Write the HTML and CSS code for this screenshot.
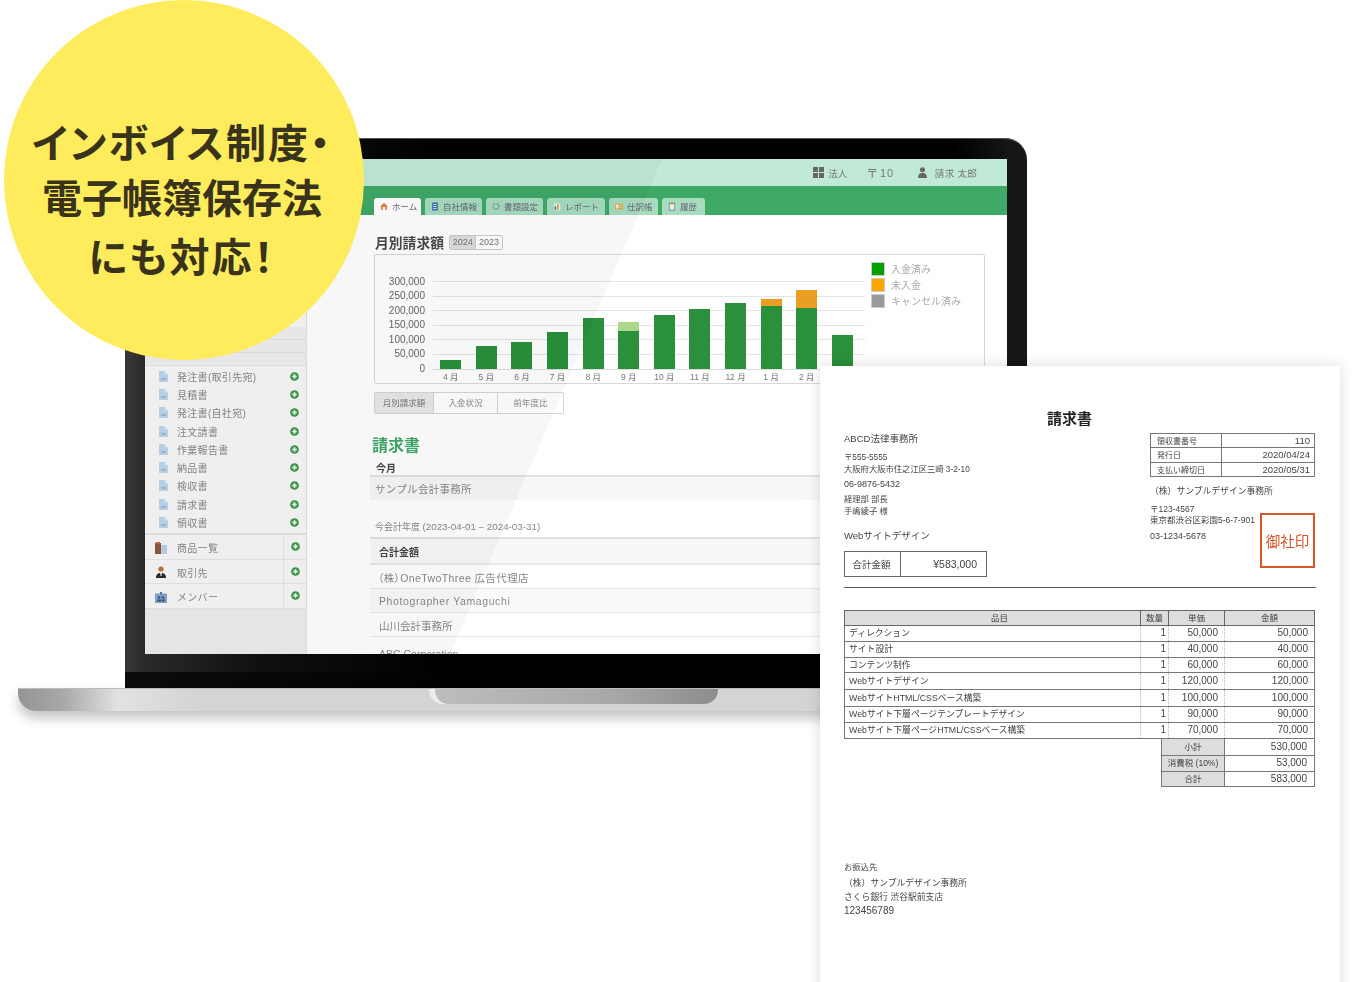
FILE: index.html
```html
<!DOCTYPE html>
<html lang="ja">
<head>
    <meta charset="UTF-8" />
    <title>インボイス制度・電子帳簿保存法にも対応</title>
    <link rel="stylesheet" href="styles.css">
</head>
<body>
<svg class="defs" aria-hidden="true">
    <filter id="rough"><feTurbulence type="fractalNoise" baseFrequency="0.5" numOctaves="2" seed="3"/><feDisplacementMap in="SourceGraphic" scale="1.6"/></filter>
    <symbol id="doc" viewBox="0 0 10 12"><path d="M0 0h6.5L10 3.5V12H0z" fill="#bdd6ee"/><path d="M6.5 0L10 3.5H6.5z" fill="#e8f1f9"/><path d="M2.5 7.5h5v2.500h-5z" fill="#a3b9d0"/></symbol>
    <symbol id="plus" viewBox="0 0 10 10"><circle cx="5" cy="5" r="4.8" fill="#3b9a4a"/><path d="M2.5 4.1h1.600V2.500h1.800v1.600h1.600v1.800H5.900v1.600H4.100V5.900H2.500z" fill="#fff"/></symbol>
    <symbol id="person" viewBox="0 0 10 12"><circle cx="5" cy="3" r="2.8"/><path d="M0 12c0-3.500 1.500-5 3.500-5.500h3C8.500 7 10 8.500 10 12z"/></symbol>
</svg>

<div class="stage">
    <div class="laptop">
        <div class="lid">
            <div class="screen">
                <header class="topbar">
                    <span class="topitem">
                        <svg class="ico-grid" viewBox="0 0 11 11"><path d="M0 0h5v5H0zM6 0h5v5H6zM0 6h5v5H0zM6 6h5v5H6z"/></svg>法人
                    </span>
                    <span class="topitem topcount"><span class="post">〒</span>10</span>
                    <span class="topitem topuser">
                        <svg class="ico-person"><use href="#person"/></svg>請求 太郎
                    </span>
                </header>
                <nav class="tabs">
                    <a class="tab tab-on tab-home">
                        <svg class="tab-ico" viewBox="0 0 10 10"><path d="M5 .5L10 5H8.500v4.500h-7V5H0z" fill="#e07a3a"/><path d="M3.500 5.500h3v4h-3z" fill="#fff"/></svg>ホーム
                    </a>
                    <a class="tab tab-info">
                        <svg class="tab-ico" viewBox="0 0 10 10"><path d="M1.500 0h7v10h-7z" fill="#3f6fb5"/><path d="M3 2h4v1H3zM3 4.500h4v1H3zM3 7h4v1H3z" fill="#cfe0f2"/></svg>自社情報
                    </a>
                    <a class="tab tab-info">
                        <svg class="tab-ico" viewBox="0 0 10 10"><circle cx="5" cy="5" r="3.5" fill="none" stroke="#8b9a90" stroke-width="2" stroke-dasharray="1.500 .7"/></svg>書類設定
                    </a>
                    <a class="tab tab-report">
                        <svg class="tab-ico" viewBox="0 0 10 10"><path d="M1 1h8v9H1z" fill="#e6efe8"/><path d="M2 5h2v4H2z" fill="#3f6fb5"/><path d="M5 2h2v7H5z" fill="#d9a93a"/></svg>レポート
                    </a>
                    <a class="tab tab-ledger">
                        <svg class="tab-ico" viewBox="0 0 10 10"><path d="M0 1.500h10v7H0z" fill="#d9a93a"/><path d="M1 2.500h3.500v5H1zM5.500 3.500H9v1H5.500zM5.500 5.500H9v1H5.500z" fill="#f6ecc8"/></svg>仕訳帳
                    </a>
                    <a class="tab tab-history">
                        <svg class="tab-ico" viewBox="0 0 10 10"><path d="M1 .5h8v9.500H1z" fill="#4d7fc0"/><path d="M2 1.500h6V9H2z" fill="#f5f0d8"/><path d="M3 0h4v2.500H3z" fill="#c79a3a"/></svg>履歴
                    </a>
                </nav>
                <div class="workspace">
                    <aside class="sidebar">
                        <div class="side-top"><div class="side-line"></div><div class="side-line"></div><div class="side-line"></div></div>
                        <ul class="doclist">
                            <li><svg class="doc"><use href="#doc"/></svg><span>発注書(取引先宛)</span><svg class="plus"><use href="#plus"/></svg></li>
                            <li><svg class="doc"><use href="#doc"/></svg><span>見積書</span><svg class="plus"><use href="#plus"/></svg></li>
                            <li><svg class="doc"><use href="#doc"/></svg><span>発注書(自社宛)</span><svg class="plus"><use href="#plus"/></svg></li>
                            <li><svg class="doc"><use href="#doc"/></svg><span>注文請書</span><svg class="plus"><use href="#plus"/></svg></li>
                            <li><svg class="doc"><use href="#doc"/></svg><span>作業報告書</span><svg class="plus"><use href="#plus"/></svg></li>
                            <li><svg class="doc"><use href="#doc"/></svg><span>納品書</span><svg class="plus"><use href="#plus"/></svg></li>
                            <li><svg class="doc"><use href="#doc"/></svg><span>検収書</span><svg class="plus"><use href="#plus"/></svg></li>
                            <li><svg class="doc"><use href="#doc"/></svg><span>請求書</span><svg class="plus"><use href="#plus"/></svg></li>
                            <li><svg class="doc"><use href="#doc"/></svg><span>領収書</span><svg class="plus"><use href="#plus"/></svg></li>
                        </ul>
                        <div class="siderow">
                            <svg class="side-ico" viewBox="0 0 12 12"><path d="M0 1h6v11H0z" fill="#8a5a44"/><path d="M1 0h4v2H1z" fill="#c9693a"/><path d="M6 3h6v9H6z" fill="#b9d2ea"/></svg>
                            <span>商品一覧</span>
                            <div class="siderow-add"><svg class="plus"><use href="#plus"/></svg></div>
                        </div>
                        <div class="siderow">
                            <svg class="side-ico" viewBox="0 0 12 12"><circle cx="6" cy="3" r="2.6" fill="#b8733f"/><path d="M1 12c0-3.500 1.500-5 5-5s5 1.500 5 5z" fill="#2b2b2b"/><path d="M5 7h2l-.5 3h-1z" fill="#e0e0e0"/></svg>
                            <span>取引先</span>
                            <div class="siderow-add"><svg class="plus"><use href="#plus"/></svg></div>
                        </div>
                        <div class="siderow">
                            <svg class="side-ico" viewBox="0 0 12 12"><path d="M0 2.500h12V12H0z" fill="#7fa8d2"/><path d="M5 1h2v2.500H5z" fill="#55779b"/><circle cx="4" cy="6.500" r="1.3" fill="#46586c"/><circle cx="8" cy="6.500" r="1.3" fill="#46586c"/><path d="M2 10.500h4V8.500H2zM6.500 10.500h3.500V8.500H6.500z" fill="#46586c"/></svg>
                            <span>メンバー</span>
                            <div class="siderow-add"><svg class="plus"><use href="#plus"/></svg></div>
                        </div>
                    </aside>
                    <main class="main">
                        <div class="chart-head">
                            <h2>月別請求額</h2>
                            <div class="years"><span class="year-on">2024</span><span>2023</span></div>
                        </div>
                        <section class="chart">
                            <div class="axis">
                                <span>300,000</span><span>250,000</span><span>200,000</span><span>150,000</span><span>100,000</span><span>50,000</span><span>0</span>
                            </div>
                            <div class="plot">
                                <div class="bars">
                                    <div class="col"><i class="paid" style="height:9px"></i></div>
                                    <div class="col"><i class="paid" style="height:23px"></i></div>
                                    <div class="col"><i class="paid" style="height:27px"></i></div>
                                    <div class="col"><i class="paid" style="height:37px"></i></div>
                                    <div class="col"><i class="paid" style="height:51px"></i></div>
                                    <div class="col"><i class="pending" style="height:9px"></i><i class="paid" style="height:38px"></i></div>
                                    <div class="col"><i class="paid" style="height:54px"></i></div>
                                    <div class="col"><i class="paid" style="height:60px"></i></div>
                                    <div class="col"><i class="paid" style="height:66px"></i></div>
                                    <div class="col"><i class="unpaid" style="height:7px"></i><i class="paid" style="height:63px"></i></div>
                                    <div class="col"><i class="unpaid" style="height:18px"></i><i class="paid" style="height:61px"></i></div>
                                    <div class="col"><i class="paid" style="height:34px"></i></div>
                                </div>
                                <div class="months">
                                    <span>4 月</span><span>5 月</span><span>6 月</span><span>7 月</span><span>8 月</span><span>9 月</span><span>10 月</span><span>11 月</span><span>12 月</span><span>1 月</span><span>2 月</span><span>3 月</span>
                                </div>
                            </div>
                            <ul class="legend">
                                <li><i class="swatch sw-paid"></i>入金済み</li>
                                <li><i class="swatch sw-unpaid"></i>未入金</li>
                                <li><i class="swatch sw-cancel"></i>キャンセル済み</li>
                            </ul>
                        </section>
                        <div class="chart-tabs">
                            <span class="ctab ctab-on">月別請求額</span><span class="ctab ctab-mid">入金状況</span><span class="ctab ctab-end">前年度比</span>
                        </div>
                        <h1 class="section-title">請求書</h1>
                        <div class="month-head">今月</div>
                        <div class="month-row">サンプル会計事務所</div>
                        <div class="period">今会計年度 <span class="period-date">(2023-04-01 – 2024-03-31)</span></div>
                        <div class="rows">
                            <div class="row row-head">合計金額</div>
                            <div class="row row-co">（株）OneTwoThree 広告代理店</div>
                            <div class="row row-alt">Photographer Yamaguchi</div>
                            <div class="row">山川会計事務所</div>
                            <div class="row row-last">ABC Corporation</div>
                        </div>
                    </main>
                </div>
                <div class="glare"></div>
            </div>
            <div class="chin"></div>
            <div class="chin-low"></div>
        </div>
        <div class="base"><div class="notch"></div></div>
    </div>

    <div class="paper">
        <h1 class="paper-title">請求書</h1>
        <div class="paper-head">
            <div class="to">
                <p class="to-name">ABCD法律事務所</p>
                <p class="to-addr">〒555-5555<br>大阪府大阪市住之江区三崎 3-2-10</p>
                <p class="to-tel">06-9876-5432</p>
                <p class="to-person">経理部 部長<br>手嶋綾子 様</p>
                <p class="to-subject">Webサイトデザイン</p>
                <table class="total-box">
                    <tr><td class="total-label">合計金額</td><td class="total-value">¥583,000</td></tr>
                </table>
            </div>
            <div class="from">
                <table class="meta">
                    <tr><td class="meta-label">領収書番号</td><td>110</td></tr>
                    <tr><td class="meta-label">発行日</td><td>2020/04/24</td></tr>
                    <tr><td class="meta-label">支払い締切日</td><td>2020/05/31</td></tr>
                </table>
                <p class="from-name">（株）サンプルデザイン事務所</p>
                <p class="from-addr">〒123-4567<br>東京都渋谷区彩園5-6-7-901</p>
                <p class="from-tel">03-1234-5678</p>
                <div class="stamp">御社印</div>
            </div>
        </div>
        <hr class="paper-rule">
        <table class="items">
            <thead>
                <tr><th class="c-name">品目</th><th class="c-qty">数量</th><th class="c-price">単価</th><th class="c-sum">金額</th></tr>
            </thead>
            <tbody>
                <tr><td>ディレクション</td><td>1</td><td>50,000</td><td>50,000</td></tr>
                <tr><td>サイト設計</td><td>1</td><td>40,000</td><td>40,000</td></tr>
                <tr class="short"><td>コンテンツ制作</td><td>1</td><td>60,000</td><td>60,000</td></tr>
                <tr class="tall"><td>Webサイトデザイン</td><td>1</td><td>120,000</td><td>120,000</td></tr>
                <tr class="tall"><td>WebサイトHTML/CSSベース構築</td><td>1</td><td>100,000</td><td>100,000</td></tr>
                <tr><td>Webサイト下層ページテンプレートデザイン</td><td>1</td><td>90,000</td><td>90,000</td></tr>
                <tr><td>Webサイト下層ページHTML/CSSベース構築</td><td>1</td><td>70,000</td><td>70,000</td></tr>
            </tbody>
        </table>
        <table class="summary">
            <tr><td class="sum-label">小計</td><td>530,000</td></tr>
            <tr><td class="sum-label">消費税 (10%)</td><td>53,000</td></tr>
            <tr class="short"><td class="sum-label">合計</td><td>583,000</td></tr>
        </table>
        <div class="bank">
            <p class="bank-title">お振込先</p>
            <p>（株）サンプルデザイン事務所<br>さくら銀行 渋谷駅前支店</p>
            <p class="bank-no">123456789</p>
        </div>
    </div>

    <div class="badge">
        <span class="badge-wide">インボイス制度・</span>
        <span>電子帳簿保存法</span>
        <span class="badge-wide badge-last">にも対応！</span>
    </div>
</div>
</body>
</html>
```

FILE: styles.css
```css
* {
    box-sizing: border-box;
}
html, body {
    margin: 0;
    background: #fff;
}
body {
    font-family: "Liberation Sans", "Noto Sans CJK JP", sans-serif;
    color: #444;
}
h1, h2, p, ul {
    margin: 0;
    padding: 0;
    list-style: none;
}
.defs {
    position: absolute;
    width: 0;
    height: 0;
}
.stage {
    position: relative;
    width: 1360px;
    height: 982px;
    overflow: hidden;
}

/* yellow badge */
.badge {
    position: absolute;
    left: 4px;
    top: 0;
    width: 360px;
    height: 360px;
    border-radius: 50%;
    background: #feec5c;
    color: #38331a;
    font-family: "Noto Sans CJK JP", sans-serif;
    font-weight: 700;
    font-size: 40px;
    line-height: 55px;
    font-feature-settings: "palt";
    display: flex;
    flex-direction: column;
    align-items: center;
    padding: 114px 4px 0 0;
    white-space: nowrap;
}
.badge-wide {
    letter-spacing: 2px;
}
.badge-last {
    margin-top: 4px;
}

/* laptop */
.laptop {
    position: absolute;
    left: 18px;
    top: 138px;
    width: 1116px;
}
.lid {
    margin-left: 107px;
    width: 902px;
    height: 550px;
    padding: 21px 20px 0;
    border-radius: 22px 22px 0 0;
    background: linear-gradient(to right, #383838 0, #2a2a2a 2%, #111 14%, #000 35%, #000 92%, #161616 98%);
    box-shadow: inset 0 1px 0 #555;
}
.chin {
    height: 18px;
}
.chin-low {
    height: 16px;
    margin: 0 -20px;
    background: linear-gradient(to right, #0c0c0c, #000 40%);
}
.base {
    height: 23px;
    border-radius: 0 0 18px 18px;
    background: linear-gradient(to right, #949494 0, #a8a8a8 4%, #e2e2e2 9%, #d4d4d4 16%);
    box-shadow: 0 7px 12px rgba(0, 0, 0, 0.24);
    display: flex;
    justify-content: center;
    border-top: 1px solid #bbb;
}
.notch {
    width: 283px;
    height: 15px;
    border-radius: 0 0 14px 14px;
    background: linear-gradient(to right, #bdbdbd, #a9a9a9 60%, #8d8d8d);
    box-shadow: -6px 0 0 #ececec;
}

/* screen */
.screen {
    position: relative;
    width: 862px;
    height: 495px;
    overflow: hidden;
    background: #fff;
    display: flex;
    flex-direction: column;
    filter: blur(0.35px);
}
.glare {
    position: absolute;
    inset: 0;
    background: rgba(0, 0, 0, 0.03);
    clip-path: polygon(0 0, 517px 0, 305px 495px, 0 495px);
}
.topbar {
    height: 27px;
    flex: none;
    background: #c0ead6;
    display: flex;
    align-items: center;
    justify-content: flex-end;
    padding-right: 30px;
    color: #777;
    font-size: 9.5px;
}
.topitem {
    display: flex;
    align-items: center;
}
.ico-grid {
    width: 11px;
    height: 11px;
    margin-right: 4px;
    fill: #666;
}
.topcount {
    margin-left: 19px;
    font-size: 11px;
    letter-spacing: 0.8px;
}
.post {
    font-size: 12px;
    margin-right: 1px;
}
.topuser {
    margin-left: 24px;
    letter-spacing: 0.3px;
}
.ico-person {
    width: 9px;
    height: 11px;
    margin-right: 8px;
    fill: #666;
}
.tabs {
    height: 29px;
    flex: none;
    background: #3fa968;
    display: flex;
    align-items: flex-end;
    gap: 4px;
    padding-left: 229px;
}
.tab {
    height: 17px;
    width: 57px;
    border-radius: 3px 3px 0 0;
    background: #a7dcbf;
    color: #667;
    font-size: 8.5px;
    display: flex;
    align-items: center;
    padding: 0 0 1px 6px;
    white-space: nowrap;
}
.tab-on {
    background: #fff;
}
.tab-home {
    width: 47px;
}
.tab-report {
    width: 58px;
}
.tab-ledger {
    width: 49px;
}
.tab-history {
    width: 43px;
}
.tab-ico {
    width: 8px;
    height: 9px;
    margin-right: 4px;
    flex: none;
}
.workspace {
    flex: 1;
    display: flex;
    min-height: 0;
}

/* sidebar */
.sidebar {
    width: 162px;
    flex: none;
    background: #ededed;
    border-right: 1px solid #e2e2e2;
}
.side-top {
    height: 151px;
    padding-top: 112px;
    background: #f7f7f7;
    border-bottom: 2px solid #e6e6e6;
}
.side-line {
    height: 13px;
    border-bottom: 1px solid #e2e2e2;
    background: #efefef;
}
.doclist {
    background: #f7f7f7;
    height: 169px;
    padding-top: 1px;
    border-bottom: 2px solid #e6e6e6;
}
.doclist li {
    height: 18.3px;
    display: flex;
    align-items: center;
    padding-left: 14px;
    font-size: 10px;
    color: #888;
    letter-spacing: 0.3px;
}
.doclist span {
    flex: 1;
}
.doc {
    width: 9px;
    height: 11px;
    margin-right: 9px;
}
.plus {
    width: 9px;
    height: 9px;
    flex: none;
}
.doclist .plus {
    margin-right: 7px;
}
.siderow {
    height: 24.5px;
    background: #f7f7f7;
    border-bottom: 1px solid #e6e6e6;
    display: flex;
    align-items: center;
    padding: 2px 0 0 10px;
    font-size: 10px;
    color: #888;
    letter-spacing: 0.3px;
}
.siderow span {
    flex: 1;
}
.side-ico {
    width: 12px;
    height: 12px;
    margin-right: 10px;
}
.siderow-add {
    width: 23px;
    height: calc(100% + 2px);
    margin-top: -2px;
    border-left: 1px solid #e6e6e6;
    display: flex;
    align-items: center;
    justify-content: center;
}

/* main column */
.main {
    flex: 1;
    padding: 17px 22px 0 63px;
    min-width: 0;
}
.chart-head {
    height: 20px;
    margin-left: 5px;
    display: flex;
    align-items: center;
}
.chart-head h2 {
    font-size: 13.8px;
    font-weight: 700;
    color: #4a4a4a;
}
.years {
    display: flex;
    margin-left: 5px;
    border: 1px solid #ccc;
    border-radius: 2px;
    font-size: 9px;
    color: #777;
    height: 15px;
    line-height: 13px;
}
.years span {
    padding: 0 2.7px;
}
.year-on {
    background: #ddd;
    border-right: 1px solid #ccc;
}
.chart {
    margin: 2px 0 0 4px;
    height: 130px;
    border: 1px solid #d8d8d8;
    border-radius: 2px;
    padding-top: 7px;
    display: flex;
    align-items: flex-start;
}
.axis {
    width: 50px;
    margin-top: 12.5px;
    display: flex;
    flex-direction: column;
    align-items: flex-end;
    font-size: 10px;
    color: #666;
}
.axis span {
    height: 14.6px;
    line-height: 14.6px;
}
.plot {
    width: 432px;
    margin: 19px 0 0 8px;
    flex: none;
}
.bars, .months {
    display: grid;
    grid-template-columns: repeat(12, 35.6px);
}
.bars {
    height: 89px;
    background: repeating-linear-gradient(to bottom, #e4e4e4 0, #e4e4e4 1px, transparent 1px, transparent 14.6px);
    border-bottom: 1px solid #ddd;
}
.col {
    display: flex;
    flex-direction: column;
    justify-content: flex-end;
    align-items: center;
}
.col i {
    display: block;
    width: 21px;
    flex: none;
}
.paid {
    background: #2a903b;
}
.pending {
    background: #acd88c;
}
.unpaid {
    background: #eb9f22;
}
.months {
    font-size: 8.5px;
    color: #777;
    text-align: center;
    line-height: 14px;
}
.legend {
    margin: -2px 0 0 6px;
    font-size: 10px;
    color: #aaa;
    white-space: nowrap;
}
.legend li {
    display: flex;
    align-items: center;
    height: 16px;
}
.swatch {
    width: 14px;
    height: 14px;
    margin: 2px 6px 0 0;
    border: 1px solid #ccc;
}
.sw-paid {
    background: #00a000;
}
.sw-unpaid {
    background: #ffa500;
}
.sw-cancel {
    background: #999;
}
.chart-tabs {
    margin: 8px 0 0 4px;
    width: 190px;
    height: 22px;
    display: flex;
    border: 1px solid #d5d5d5;
    border-radius: 2px;
    font-size: 8.5px;
    color: #888;
}
.ctab {
    width: 59px;
    text-align: center;
    line-height: 20px;
    border-right: 1px solid #d5d5d5;
}
.ctab-mid {
    width: 64px;
}
.ctab-end {
    width: 65px;
    border-right: none;
}
.ctab-on {
    background: #e8e8e8;
    color: #777;
}
.section-title {
    margin: 21px 0 0 2px;
    font-size: 16px;
    line-height: 22px;
    font-weight: 700;
    color: #3fa968;
}
.month-head {
    height: 20px;
    padding: 5px 0 0 6px;
    font-size: 10px;
    font-weight: 700;
    line-height: 13px;
    color: #444;
    border-bottom: 2px solid #e2e2e2;
}
.month-row {
    height: 23px;
    padding: 1px 0 0 5px;
    line-height: 23px;
    background: #f7f7f7;
    font-size: 10.5px;
    letter-spacing: 0.3px;
    color: #888;
}
.period {
    height: 37px;
    padding: 21px 0 0 5px;
    font-size: 9px;
    line-height: 12px;
    color: #888;
}
.period-date {
    font-size: 9.8px;
}
.rows {
    border-top: 2px solid #e2e2e2;
}
.row {
    height: 24px;
    padding: 3px 0 0 9px;
    line-height: 20px;
    font-size: 10.5px;
    color: #888;
    border-bottom: 1px solid #e8e8e8;
}
.row-head {
    height: 26px;
    background: #f8f8f8;
    border-bottom-width: 2px;
    font-weight: 700;
    font-size: 10px;
    color: #444;
    padding-top: 4px;
}
.row-co {
    letter-spacing: 0.4px;
    font-feature-settings: "palt";
    padding-left: 8px;
}
.row-alt {
    background: #fafafa;
    letter-spacing: 0.6px;
    padding-top: 2px;
}
.row-last {
    padding-top: 7px;
}

/* invoice sheet */
.paper {
    position: absolute;
    left: 820px;
    top: 366px;
    width: 520px;
    height: 640px;
    background: #fff;
    padding: 43px 25px 0 24px;
    box-shadow: 0 0 14px rgba(0, 0, 0, 0.14);
    color: #444;
    font-size: 8.8px;
}
.paper-title, .paper-head, .items, .summary, .bank {
    filter: blur(0.25px);
}
.paper-title {
    text-align: center;
    font-size: 15px;
    font-weight: 700;
    line-height: 20px;
    color: #222;
    padding-right: 20px;
}
.paper-head {
    display: flex;
    justify-content: space-between;
    margin-top: 5px;
    height: 153px;
}
.to {
    width: 143px;
    white-space: nowrap;
}
.to-name {
    font-size: 9.5px;
    line-height: 12px;
    margin-top: -1px;
}
.to-addr {
    line-height: 11.5px;
    margin-top: 7px;
    font-size: 8.3px;
}
.to-tel {
    margin-top: 3px;
    line-height: 12px;
    font-size: 9px;
}
.to-person {
    margin-top: 4px;
    font-size: 8.3px;
    line-height: 11.5px;
}
.to-subject {
    margin-top: 13px;
    font-size: 9.5px;
    line-height: 12px;
}
.total-box {
    margin-top: 9px;
    width: 143px;
    height: 26px;
    border-collapse: collapse;
    font-size: 9.5px;
}
.total-box td {
    border: 1px solid #666;
}
.total-label {
    width: 56px;
    padding-right: 3px;
    text-align: center;
}
.total-box .total-value {
    text-align: right;
    padding-right: 9px;
    font-size: 10.5px;
}
.from {
    position: relative;
    width: 165px;
    white-space: nowrap;
    margin-top: -1px;
}
.meta {
    width: 165px;
    border-collapse: collapse;
    font-size: 9.5px;
}
.meta td {
    height: 14.3px;
    padding: 0 4px 0 6px;
    border: 1px solid #777;
    text-align: right;
}
.meta .meta-label {
    width: 71px;
    text-align: left;
    font-size: 8px;
}
.from-name {
    margin-top: 8px;
    line-height: 12px;
}
.from-addr {
    margin-top: 7px;
    line-height: 11.5px;
    font-size: 8.5px;
}
.from-tel {
    margin-top: 3px;
    line-height: 12px;
    font-size: 9px;
}
.stamp {
    position: absolute;
    right: 0;
    top: 80px;
    width: 55px;
    height: 55px;
    border: 2px solid #d9552c;
    color: #d9552c;
    font-size: 14.5px;
    line-height: 54px;
    text-align: center;
    white-space: nowrap;
    filter: url(#rough);
}
.paper-rule {
    margin: 0;
    height: 1px;
    width: 472px;
    border: none;
    background: #555;
}
.items {
    margin-top: 22px;
    width: 471px;
    table-layout: fixed;
    border-collapse: collapse;
    font-size: 10px;
    line-height: 12px;
}
.items th {
    height: 15px;
    padding: 0;
    background: #ddd;
    border: 1px solid #666;
    font-weight: 400;
    font-size: 8.5px;
}
.items .c-name {
    width: 296px;
    padding-left: 14px;
}
.c-qty {
    width: 28px;
}
.c-price {
    width: 56px;
}
.items td {
    height: 16px;
    padding: 0 6px 1px 4px;
    border-top: 1px solid #777;
    border-bottom: 1px solid #777;
    border-left: 1px dotted #bbb;
    border-right: 1px dotted #bbb;
    text-align: right;
    white-space: nowrap;
}
.items td:first-child {
    text-align: left;
    border-left: 1px solid #777;
    font-size: 8.8px;
}
.items td:nth-child(2) {
    padding-right: 2px;
}
.items td:last-child {
    border-right: 1px solid #777;
}
.items .short td {
    height: 15px;
}
.items .tall td {
    height: 17px;
}
.summary {
    margin-left: 317px;
    width: 154px;
    border-collapse: collapse;
    font-size: 10px;
    line-height: 12px;
}
.summary td {
    height: 16px;
    padding: 0 7px 0 0;
    border: 1px solid #777;
    border-top: none;
    text-align: right;
    white-space: nowrap;
}
.summary .short td {
    height: 15px;
}
.summary .sum-label {
    width: 63px;
    padding: 0;
    text-align: center;
    background: #ddd;
    font-size: 8.5px;
}
.bank {
    margin-top: 74px;
    white-space: nowrap;
    line-height: 13.5px;
}
.bank-title {
    font-size: 8.3px;
    margin-bottom: 3px;
}
.bank-no {
    font-size: 10px;
}
```
